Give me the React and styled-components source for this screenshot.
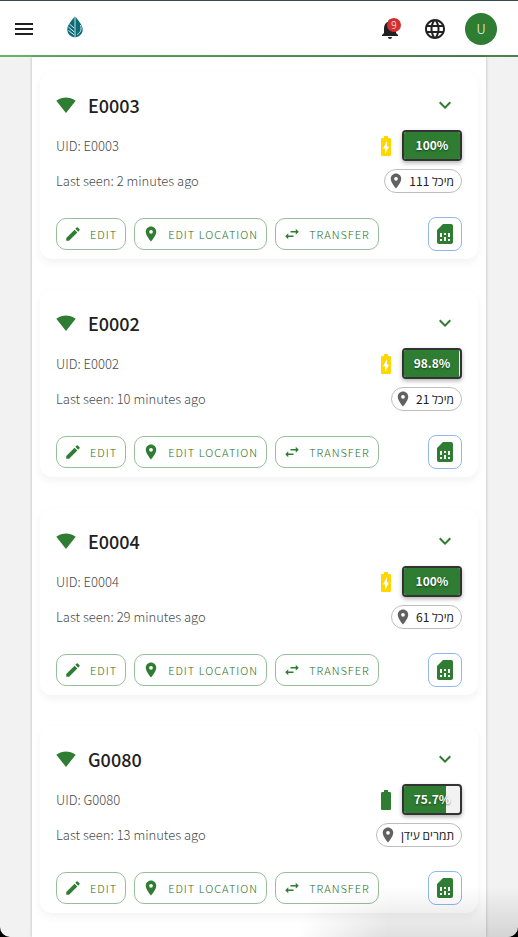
import React, { useState } from "react";
import styled, { createGlobalStyle } from "styled-components";
import {
  MdBatteryChargingFull,
  MdBatteryFull,
  MdEdit,
  MdExpandMore,
  MdLanguage,
  MdLocationOn,
  MdMenu,
  MdNotifications,
  MdSignalWifi4Bar,
  MdSimCard,
  MdSwapHoriz,
} from "react-icons/md";

const devices = [
  { id: "E0003", lastSeen: "2 minutes ago", battery: 100, charging: true, location: "מיכל 111" },
  { id: "E0002", lastSeen: "10 minutes ago", battery: 98.8, charging: true, location: "מיכל 21" },
  { id: "E0004", lastSeen: "29 minutes ago", battery: 100, charging: true, location: "מיכל 61" },
  { id: "G0080", lastSeen: "13 minutes ago", battery: 75.7, charging: false, location: "תמרים עידן" },
];

function Logo() {
  return (
    <svg width="16" height="22" viewBox="0 0 16 22" aria-hidden="true">
      <path d="M7.6 0.4C5 4.2 0.3 8.6 0.3 13.6c0 4.2 3.2 7.3 7.3 7.8z" fill="#0d6b78" />
      <path d="M8.4 0.4c2.6 3.8 7.3 8.2 7.3 13.2 0 4.2-3.2 7.3-7.3 7.8z" fill="#0d6b78" />
      <path
        d="M2.5 8l4.5 4M1.5 11l5.5 4.8M1.5 14.5l5.5 4.3"
        stroke="#d9eef0"
        strokeWidth="1"
        fill="none"
      />
      <path d="M13.5 9c1.3 3.6 0.5 7.5-3.3 9.5" stroke="#d9eef0" strokeWidth="1" fill="none" />
    </svg>
  );
}

function DeviceCard({ device }) {
  const [open, setOpen] = useState(false);

  return (
    <Card>
      <CardHeader>
        <MdSignalWifi4Bar size={20} color="#2e7d32" />
        <DeviceName>{device.id}</DeviceName>
        <ExpandButton aria-label="Show details" aria-expanded={open} onClick={() => setOpen(!open)}>
          <MdExpandMore size={24} />
        </ExpandButton>
      </CardHeader>
      <InfoRow>
        <InfoText>UID: {device.id}</InfoText>
        <BatteryGroup>
          {device.charging ? (
            <MdBatteryChargingFull size={24} color="#ffd600" />
          ) : (
            <MdBatteryFull size={24} color="#2e7d32" />
          )}
          <BatteryBox>
            <BatteryFill style={{ width: `${device.battery}%` }} />
            <BatteryLabel>{device.battery}%</BatteryLabel>
          </BatteryBox>
        </BatteryGroup>
      </InfoRow>
      <InfoRow>
        <InfoText>Last seen: {device.lastSeen}</InfoText>
        <LocationChip>
          <MdLocationOn size={18} color="#616161" />
          <span dir="rtl">{device.location}</span>
        </LocationChip>
      </InfoRow>
      <Actions>
        <ActionButton>
          <MdEdit size={18} />
          EDIT
        </ActionButton>
        <ActionButton>
          <MdLocationOn size={18} />
          EDIT LOCATION
        </ActionButton>
        <ActionButton>
          <MdSwapHoriz size={18} />
          TRANSFER
        </ActionButton>
        <SimButton aria-label="SIM card">
          <MdSimCard size={24} />
        </SimButton>
      </Actions>
    </Card>
  );
}

function App() {
  return (
    <>
      <GlobalStyle />
      <Page>
        <Toolbar>
          <IconButton aria-label="Menu">
            <MdMenu size={24} />
          </IconButton>
          <LogoLink href="#" aria-label="Home">
            <Logo />
          </LogoLink>
          <ToolbarActions>
            <IconButton aria-label="Notifications">
              <MdNotifications size={24} />
              <Badge>9</Badge>
            </IconButton>
            <IconButton aria-label="Language">
              <MdLanguage size={24} />
            </IconButton>
          </ToolbarActions>
          <Avatar aria-label="Account">U</Avatar>
        </Toolbar>
        <Content>
          {devices.map((device) => (
            <DeviceCard key={device.id} device={device} />
          ))}
        </Content>
        <WindowEdge />
      </Page>
    </>
  );
}

export default App;

// Styled components
const GlobalStyle = createGlobalStyle`
  * {
    box-sizing: border-box;
  }

  body {
    margin: 0;
    overflow: hidden;
    background: #f2f2f2;
    color: #212121;
    font-family: "Noto Sans CJK JP", "Open Sans", sans-serif;
  }

  button {
    padding: 0;
    border: 0;
    background: none;
    color: inherit;
    font-family: inherit;
    cursor: pointer;
  }

  svg {
    display: block;
    flex-shrink: 0;
  }
`;

const Page = styled.div`
  display: flex;
  flex-direction: column;
  height: 100vh;
  overflow: hidden;
`;

const Toolbar = styled.header`
  display: flex;
  align-items: center;
  flex-shrink: 0;
  height: 57px;
  padding: 2px 21px 0 12px;
  border-bottom: 2px solid;
  border-image: linear-gradient(90deg, #66b56a, #4b7f4f) 1;
  background: #fff;
  box-shadow: inset 0 1px #37474f;
`;

const ToolbarActions = styled.div`
  display: flex;
  gap: 21px;
  margin: 0 18px 0 auto;
`;

const IconButton = styled.button`
  position: relative;
  display: flex;
  align-items: center;
  justify-content: center;
  width: 24px;
  height: 40px;
`;

const LogoLink = styled.a`
  margin: 0 0 4px 31px;
`;

const Badge = styled.span`
  position: absolute;
  top: 9px;
  right: 1px;
  width: 14px;
  height: 14px;
  border-radius: 50%;
  background: #d32f2f;
  color: #fff;
  font-size: 10px;
  font-weight: 300;
  line-height: 14px;
  text-align: center;
`;

const Avatar = styled.button`
  width: 32px;
  height: 32px;
  border-radius: 50%;
  && {
    background: #2e7d32;
    color: #fff;
  }
  font-size: 13px;
  font-weight: 300;
`;

const Content = styled.main`
  display: flex;
  flex: 1;
  flex-direction: column;
  gap: 31px;
  margin: 0 32px;
  padding: 15px 8px;
  overflow: hidden;
  background: #fff;
  box-shadow: 0 0 3px rgba(0, 0, 0, 0.25);
`;

const Card = styled.section`
  flex-shrink: 0;
  padding: 16px 16px 8px;
  border-radius: 12px;
  background: #fff;
  box-shadow: 0 4px 8px rgba(0, 0, 0, 0.05);
`;

const CardHeader = styled.div`
  display: flex;
  align-items: center;
  gap: 12px;
  height: 34px;
  margin-bottom: 8px;
`;

const DeviceName = styled.h2`
  flex: 1;
  margin: 0;
  font-size: 18px;
  font-weight: 500;
  line-height: 24px;
`;

const ExpandButton = styled.button`
  display: flex;
  align-items: center;
  justify-content: center;
  width: 34px;
  height: 34px;
  && {
    color: #2e7d32;
  }
`;

const InfoRow = styled.div`
  display: flex;
  align-items: center;
  justify-content: space-between;
  height: 31px;
  margin-bottom: 4px;
`;

const InfoText = styled.span`
  color: #4a4a4a;
  font-size: 13px;
  font-weight: 300;
  line-height: 20px;
`;

const BatteryGroup = styled.div`
  display: flex;
  align-items: center;
  gap: 4px;
`;

const BatteryBox = styled.div`
  position: relative;
  width: 60px;
  height: 31px;
  overflow: hidden;
  border: 2px solid #333;
  border-radius: 4px;
  background: #f2f2f2;
  box-shadow: 0 2px 4px rgba(0, 0, 0, 0.3);
`;

const BatteryFill = styled.div`
  height: 100%;
  background: #2e7d32;
`;

const BatteryLabel = styled.span`
  position: absolute;
  inset: 0;
  color: #fff;
  font-size: 12px;
  font-weight: 700;
  line-height: 26px;
  text-align: center;
  text-shadow: 0 1px 2px rgba(0, 0, 0, 0.5);
`;

const LocationChip = styled.div`
  display: flex;
  align-items: center;
  gap: 4px;
  height: 24px;
  padding: 0 7px 0 2px;
  border: 1px solid #bdbdbd;
  border-radius: 12px;
  font-size: 12px;
  line-height: 20px;
`;

const Actions = styled.div`
  display: flex;
  align-items: center;
  gap: 8px;
  margin-top: 21px;
`;

const ActionButton = styled.button`
  display: flex;
  align-items: center;
  gap: 8px;
  height: 32px;
  && {
    padding: 0 8px 0 7px;
    border: 1px solid #97be99;
    color: #1f7024;
  }
  border-radius: 10px;
  font-size: 11px;
  font-weight: 300;
  letter-spacing: 1px;
  white-space: nowrap;

  svg {
    color: #2e7d32;
  }
`;

const SimButton = styled.button`
  display: flex;
  align-items: center;
  justify-content: center;
  width: 34px;
  height: 34px;
  margin-left: auto;
  && {
    border: 1px solid #90b8ee;
    color: #2e7d32;
  }
  border-radius: 8px;
`;

const WindowEdge = styled.div`
  position: fixed;
  right: 0;
  bottom: 0;
  left: 0;
  height: 50px;
  border-radius: 0 0 10px 10px;
  box-shadow: 0 10px 0 10px #000;
  clip-path: inset(0);
  pointer-events: none;

  &::before {
    content: "";
    display: block;
    height: 100%;
    border-radius: 0 0 10px 10px;
    background: linear-gradient(transparent, rgba(0, 0, 0, 0.12));
    mask-image: linear-gradient(100deg, transparent 58%, #000 75%);
  }
`;
